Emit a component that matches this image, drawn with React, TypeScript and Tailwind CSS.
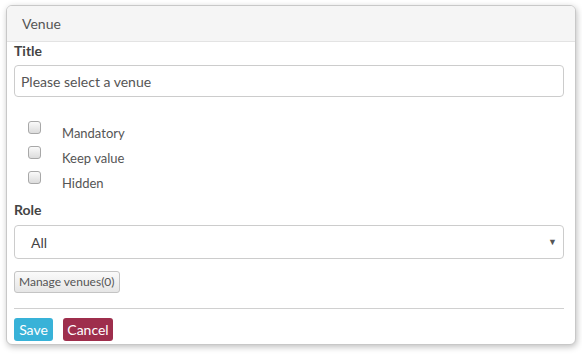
export default function App() {
  const opts = ['Mandatory', 'Keep value', 'Hidden'];
  return (
    <div className="w-[582px] h-[355px] bg-white pt-[5px] pl-[6px]" style={{ fontFamily: 'Lato, "Liberation Sans", sans-serif' }}>
      <div className="w-[570px] h-[340px] border border-[#c8c8c8] rounded-[6px] shadow-[1px_2px_6px_rgba(0,0,0,0.25)] overflow-hidden bg-white">
        {/* Header */}
        <div className="h-[36px] bg-[#f5f5f5] border-b border-[#e3e3e3] flex items-center px-[15px] text-[14px] text-[#555]">
          Venue
        </div>

        <div className="pl-[7px] pr-[11px]">
          <div className="mt-0 text-[14px] font-bold text-[#444] leading-[17px]">Title</div>
          <div className="mt-[6px] h-[32px] border border-[#ccc] rounded-[4px] flex items-center px-[6px] text-[14px] text-[#555]">
            Please select a venue
          </div>

          {/* Options */}
          <div className="mt-[24px] flex flex-col">
            {opts.map((o) => (
              <div key={o} className="h-[25px] flex items-start">
                <span className="ml-[14px] w-[13px] h-[13px] rounded-[3px] border border-[#a8a8a8] bg-gradient-to-b from-[#fafafa] to-[#dcdcdc] shrink-0" />
                <span className="ml-[21px] mt-[4px] text-[13px] text-[#555] leading-[16px]">{o}</span>
              </div>
            ))}
          </div>

          <div className="mt-[5px] text-[14px] font-bold text-[#444] leading-[17px]">Role</div>
          <div className="mt-[7px] h-[34px] border border-[#ccc] rounded-[4px] flex items-center justify-between pl-[16px] pr-[6px] text-[14px] text-[#444]">
            <span>All</span>
            <span className="text-[9px] text-[#555]">▼</span>
          </div>

          <div className="mt-[12px] flex">
            <div className="h-[22px] px-[4px] border border-[#c4c4c4] rounded-[3px] bg-gradient-to-b from-[#fafafa] to-[#e6e6e6] text-[12px] text-[#555] flex items-center">
              Manage venues(0)
            </div>
          </div>

          <div className="mt-[15px] border-t border-[#d0d0d0]" />

          <div className="mt-[9px] flex gap-[10px]">
            <div className="h-[23px] w-[39px] rounded-[3px] bg-[#38b2d8] text-white text-[14px] flex items-center justify-center">Save</div>
            <div className="h-[23px] w-[50px] rounded-[3px] bg-[#9e2e4c] text-white text-[14px] flex items-center justify-center">Cancel</div>
          </div>
        </div>
      </div>
    </div>
  );
}
